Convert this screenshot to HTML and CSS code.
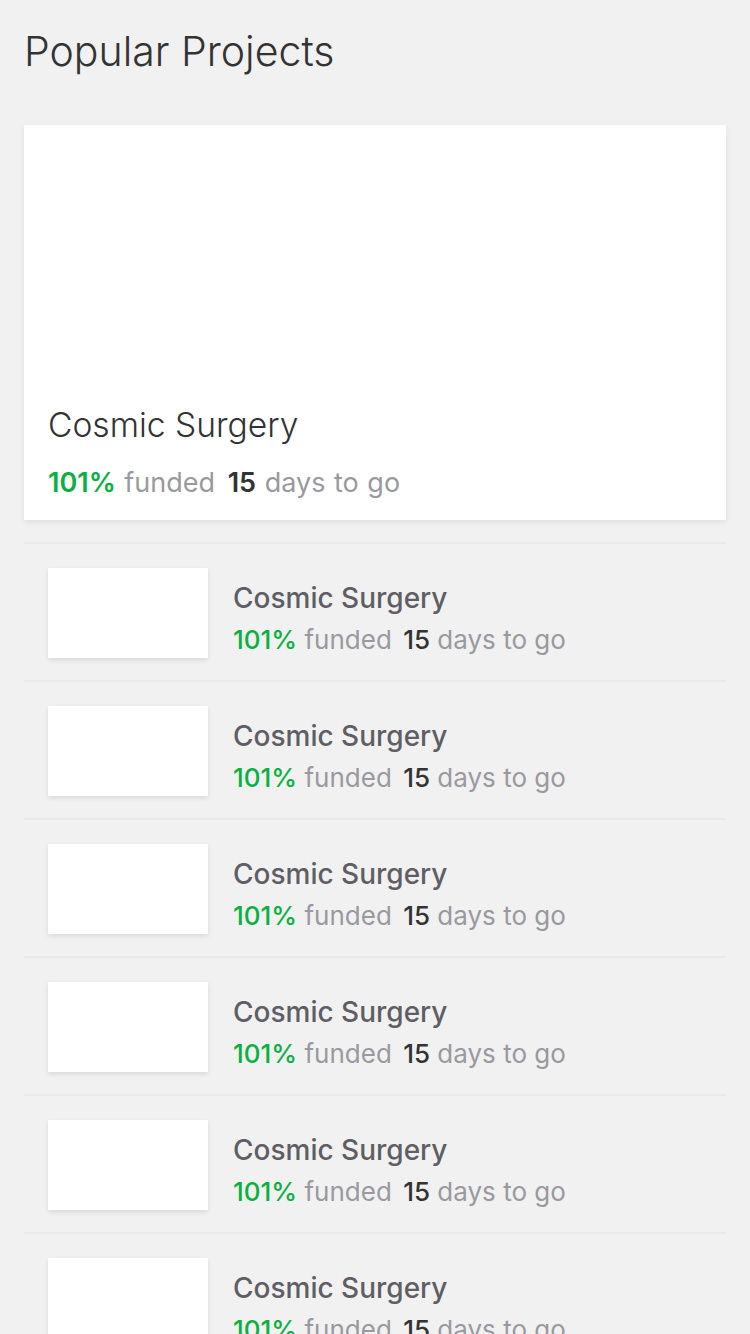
FILE: index.html
```html
<!DOCTYPE html>
<html lang="en">
<head>
<meta charset="utf-8">
<title>Popular Projects</title>
<link rel="stylesheet" href="styles.css">
</head>
<body>
<main class="page">
  <h1 class="page-title">Popular Projects</h1>
  <article class="feature">
    <div class="feature-image"></div>
    <h2 class="feature-title">Cosmic Surgery</h2>
    <p class="stats stats-lg"><span class="pct">101%</span> funded <span class="days">15</span> days to go</p>
  </article>
  <ul class="list">
    <li class="row"><div class="thumb"></div><div class="info"><h3 class="row-title">Cosmic Surgery</h3><p class="stats"><span class="pct">101%</span> funded <span class="days">15</span> days to go</p></div></li>
    <li class="row"><div class="thumb"></div><div class="info"><h3 class="row-title">Cosmic Surgery</h3><p class="stats"><span class="pct">101%</span> funded <span class="days">15</span> days to go</p></div></li>
    <li class="row"><div class="thumb"></div><div class="info"><h3 class="row-title">Cosmic Surgery</h3><p class="stats"><span class="pct">101%</span> funded <span class="days">15</span> days to go</p></div></li>
    <li class="row"><div class="thumb"></div><div class="info"><h3 class="row-title">Cosmic Surgery</h3><p class="stats"><span class="pct">101%</span> funded <span class="days">15</span> days to go</p></div></li>
    <li class="row"><div class="thumb"></div><div class="info"><h3 class="row-title">Cosmic Surgery</h3><p class="stats"><span class="pct">101%</span> funded <span class="days">15</span> days to go</p></div></li>
    <li class="row"><div class="thumb"></div><div class="info"><h3 class="row-title">Cosmic Surgery</h3><p class="stats"><span class="pct">101%</span> funded <span class="days">15</span> days to go</p></div></li>
  </ul>
</main>
</body>
</html>
```

FILE: styles.css
```css
* { box-sizing: border-box; }
html, body { margin: 0; padding: 0; }
body {
  background: #f1f1f1;
  font-family: Inter, "Noto Sans", "Liberation Sans", sans-serif;
  color: #333;
  overflow: hidden;
  height: 1334px;
}
.page { padding: 0 24px; }
.page-title {
  margin: 0;
  padding-top: 27px;
  height: 125px;
  font-size: 41px;
  font-weight: 300;
  color: #333;
  line-height: 48px;
}
.feature {
  background: #fff;
  height: 395px;
  box-shadow: 0 2px 6px rgba(0,0,0,0.08);
  padding: 0 24px 20px;
  display: flex;
  flex-direction: column;
}
.feature-image { flex: 1; }
.feature-title {
  margin: 0;
  font-size: 33.6px;
  font-weight: 300;
  line-height: 40px;
  color: #333;
}
.stats {
  margin: 0;
  font-size: 26px;
  color: #9a99a0;
  white-space: nowrap;
}
.stats-lg { margin-top: 21px; line-height: 34px; font-size: 27px; word-spacing: 1px; }
.pct { color: #0bb140; font-weight: 500; }
.days { color: #333; font-weight: 500; margin-left: 4px; }
.stats-lg .pct, .stats-lg .days { font-weight: 600; }
.list { list-style: none; margin: 22px 0 0; padding: 0; }
.row {
  border-top: 2px solid #e9e9e9;
  height: 138px;
  padding: 24px 24px 0;
  display: flex;
  gap: 25px;
}
.thumb {
  width: 160px;
  height: 90px;
  background: #fff;
  flex: none;
  box-shadow: 0 2px 5px rgba(0,0,0,0.1);
}
.info { padding-top: 13px; }
.row-title {
  margin: 0;
  font-size: 28px;
  font-weight: 500;
  color: #5f5e64;
  line-height: 34px;
}
.info .stats { line-height: 34px; margin-top: 8px; }
```
